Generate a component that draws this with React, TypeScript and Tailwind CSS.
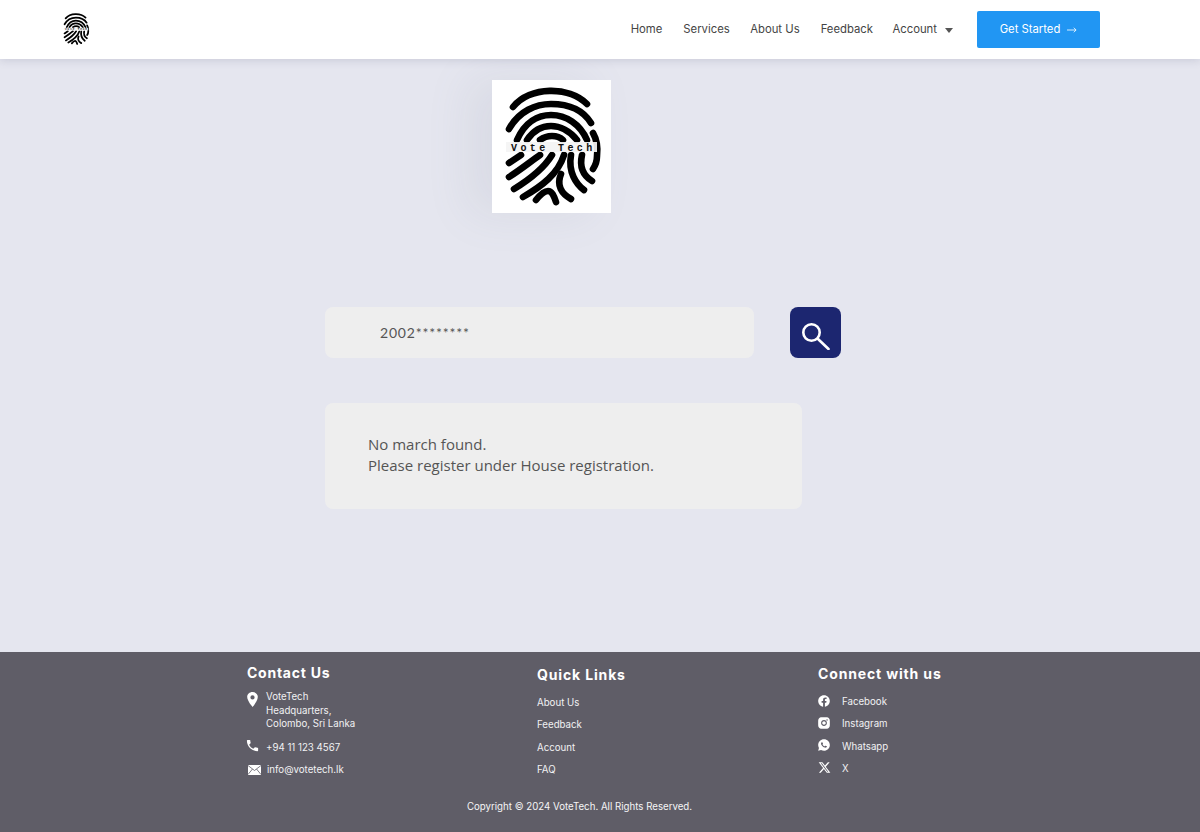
import React from "react";
import { FaFacebook } from "react-icons/fa";
import { FaXTwitter } from "react-icons/fa6";
import { RiInstagramFill, RiWhatsappFill } from "react-icons/ri";
import { IoLocationSharp } from "react-icons/io5";
import { MdLocalPhone } from "react-icons/md";

const ridges = [
  "M21 27 C38 6 77 6 95 24",
  "M17 49 C27 31 44 24 59 24 C77 24 91 30 99 43",
  "M25 60 C33 42 46 35 59 35 C74 35 88 44 95 60",
  "M35 60 C41 51 50 46 59 46 C68 46 78 51 85 60",
  "M48 60 C52 57 56 56 60 56 C64 56 68 57 71 60",
  "M101 53 C105 60 106 68 105 76 C105 82 103 86 101 89",
  "M17 83 L29 75",
  "M17 97 C28 90 38 82 48 75",
  "M22 109 C40 98 52 88 60 75",
  "M31 117 C50 106 66 94 72 75",
  "M79 75 C76 92 84 104 92 110",
  "M90 75 C87 88 92 96 100 101",
  "M69 94 C64 106 70 114 79 119",
  "M44 120 C48 115 52 111 56 111 C60 111 62 116 64 122",
];

function Fingerprint({ className }: { className: string }) {
  return (
    <svg viewBox="0 0 119 133" className={className} fill="none">
      {ridges.map((d) => (
        <path key={d} d={d} stroke="#000" strokeWidth="6.6" strokeLinecap="round" />
      ))}
      <rect x="14" y="62" width="91" height="10" fill="#f4f4f4" opacity="0.92" />
      <text x="19" y="70.5" fontFamily="'Liberation Mono', monospace" fontWeight="700" fontSize="10" letterSpacing="3.4" fill="#111">
        Vote Tech
      </text>
    </svg>
  );
}

function Navbar() {
  return (
    <header className="h-[59px] bg-white shadow-[0_2px_8px_rgba(90,95,130,0.18)] relative flex items-center pl-[60px] pr-[100px]">
      <Fingerprint className="w-[32px] h-[36px] -mt-[2px]" />
      <nav className="ml-auto flex items-center text-[11.3px] text-[#444444]">
        <a className="mr-[21px]">Home</a>
        <a className="mr-[20.5px]">Services</a>
        <a className="mr-[21px]">About Us</a>
        <a className="mr-[19.5px]">Feedback</a>
        <a>Account</a>
        <span className="ml-[8px] mt-[1px] w-0 h-0 border-x-[4px] border-x-transparent border-t-[5px] border-t-[#555555]"></span>
        <button className="ml-[24px] w-[123px] h-[37px] rounded-[2px] bg-[#2196f3] text-white text-[11.3px] flex items-center justify-center gap-[7px]">
          Get Started
          <svg width="10" height="8" viewBox="0 0 11 8" fill="none" stroke="#fff" strokeWidth="0.9">
            <path d="M0 4 H10 M7.5 1.5 L10 4 L7.5 6.5" />
          </svg>
        </button>
      </nav>
    </header>
  );
}

function Footer() {
  return (
    <footer className="h-[180px] bg-[#5f5d67] text-white relative text-[9.7px] leading-[13px]">
      <div className="flex pl-[247px] h-[148px]">
        <div className="w-[290px] pt-[12px]">
          <h3 className="text-[14px] leading-[17px] font-bold tracking-[0.75px]">Contact Us</h3>
          <div className="flex mt-[9px]">
            <IoLocationSharp className="w-[17px] h-[17px] -ml-[3px] mt-[1px] shrink-0" />
            <p className="ml-[5px] leading-[13.5px] text-[#f1f1f3]">
              VoteTech
              <br />
              Headquarters,
              <br />
              Colombo, Sri Lanka
            </p>
          </div>
          <div className="flex items-center mt-[9px] h-[16px]">
            <MdLocalPhone className="w-[15px] h-[15px] -ml-[2px] -mt-[4px]" />
            <span className="ml-[6px] text-[#f1f1f3]">+94 11 123 4567</span>
          </div>
          <div className="flex items-center mt-[6px] h-[16px]">
            <svg width="13" height="10" viewBox="0 0 13 10" className="shrink-0 ml-[1px]">
              <rect width="13" height="10" fill="#fff" />
              <path d="M0 0.5 L6.5 5.5 L13 0.5 M0 9.5 L4.5 4 M13 9.5 L8.5 4" fill="none" stroke="#5f5d67" strokeWidth="0.8" />
            </svg>
            <span className="ml-[6px] text-[#f1f1f3]">info@votetech.lk</span>
          </div>
        </div>
        <div className="w-[281px] pt-[14px]">
          <h3 className="text-[14px] leading-[17px] font-bold tracking-[0.85px]">Quick Links</h3>
          <ul className="mt-[13px] flex flex-col gap-[9.4px] text-[#f1f1f3]">
            <li>About Us</li>
            <li>Feedback</li>
            <li>Account</li>
            <li>FAQ</li>
          </ul>
        </div>
        <div className="pt-[13px]">
          <h3 className="text-[14px] leading-[17px] font-bold tracking-[0.85px]">Connect with us</h3>
          <ul className="mt-[13px] flex flex-col gap-[9.4px] text-[#f1f1f3]">
            <li className="flex items-center">
              <FaFacebook className="w-[12px] h-[12px] text-white -mt-[2px]" />
              <span className="ml-[12px]">Facebook</span>
            </li>
            <li className="flex items-center">
              <RiInstagramFill className="w-[14px] h-[14px] -ml-[1px] text-white -mt-[2px]" />
              <span className="ml-[11px]">Instagram</span>
            </li>
            <li className="flex items-center">
              <RiWhatsappFill className="w-[14px] h-[14px] -ml-[1px] text-white -mt-[3px]" />
              <span className="ml-[11px]">Whatsapp</span>
            </li>
            <li className="flex items-center">
              <FaXTwitter className="w-[13px] h-[13px] text-white -mt-[2px]" />
              <span className="ml-[11px]">X</span>
            </li>
          </ul>
        </div>
      </div>
      <p className="text-center pr-[41px] text-[#f5f5f6]">Copyright © 2024 VoteTech. All Rights Reserved.</p>
    </footer>
  );
}

export default function App() {
  return (
    <div className="w-[1200px] h-[832px] flex flex-col bg-[#e5e6ef] overflow-hidden font-['Inter',sans-serif]">
      <Navbar />
      <main className="flex-1 pt-[21px] pl-[325px]">
        <div className="ml-[167px] w-[119px] h-[133px] bg-white shadow-[-22px_0px_45px_rgba(120,125,150,0.11)]">
          <Fingerprint className="w-full h-full" />
        </div>
        <div className="flex mt-[94px]">
          <div className="w-[429px] h-[51px] rounded-[8px] bg-[#eeeeee] flex items-center pl-[55px] text-[14px] text-[#555555] font-['Lato',sans-serif] tracking-[0.8px]">
            2002********
          </div>
          <button className="ml-[36px] w-[51px] h-[51px] rounded-[8px] bg-[#1c2670] flex items-center justify-center">
            <svg width="34" height="34" viewBox="0 0 34 34" fill="none" stroke="#fff">
              <circle cx="12.5" cy="16.5" r="8.2" strokeWidth="2.6" />
              <path d="M19 23 L29.5 33" strokeWidth="2.6" strokeLinecap="round" />
            </svg>
          </button>
        </div>
        <div className="mt-[45px] w-[477px] h-[106px] rounded-[8px] bg-[#eeeeee] pl-[43px] pt-[31px] text-[15px] leading-[21px] text-[#555555] font-['Open_Sans',sans-serif]">
          <p>No march found.</p>
          <p>Please register under House registration.</p>
        </div>
      </main>
      <Footer />
    </div>
  );
}
